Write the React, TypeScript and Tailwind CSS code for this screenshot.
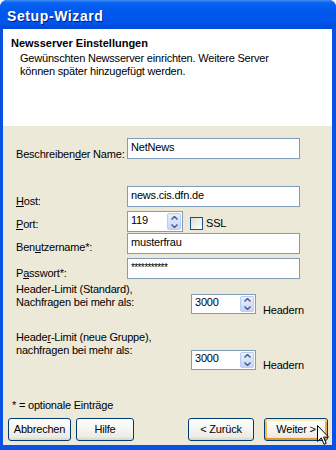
import React from "react";

function SpinButtons() {
  return (
    <div className="flex flex-col w-[14px] my-[1px] mr-[1px] rounded-[2px] border border-[#B9CBF7] bg-[linear-gradient(to_bottom,#E7EEFD,#C5D5FA)] overflow-hidden">
      <div className="flex-1 flex items-center justify-center border-b border-[#D7E2FC]">
        <svg width="7" height="4" viewBox="0 0 7 4">
          <path d="M0.5 3.5 L3.5 0.5 L6.5 3.5" stroke="#4D6185" strokeWidth="1.5" fill="none" />
        </svg>
      </div>
      <div className="flex-1 flex items-center justify-center">
        <svg width="7" height="4" viewBox="0 0 7 4">
          <path d="M0.5 0.5 L3.5 3.5 L6.5 0.5" stroke="#4D6185" strokeWidth="1.5" fill="none" />
        </svg>
      </div>
    </div>
  );
}

function TextBox({ value, cls }: { value: React.ReactNode; cls?: string }) {
  return (
    <div className={`w-[173px] h-[21px] border border-[#7F9DB9] bg-white pl-[3px] pt-[2px] ${cls ?? ""}`}>
      {value}
    </div>
  );
}

function XPButton({ label, width, focused }: { label: string; width: string; focused?: boolean }) {
  return (
    <div
      className={`${width} h-[23px] flex items-center justify-center rounded-[3px] border border-[#003C74] bg-[linear-gradient(to_bottom,#FFFFFF_0%,#F5F4F0_50%,#ECEBE4_85%,#D8D3C7_100%)] ${
        focused
          ? "shadow-[inset_0_2px_0_#FFE9A8,inset_0_-2px_0_#E5972E,inset_2px_0_0_#F8B94A,inset_-2px_0_0_#F0A83A]"
          : ""
      }`}
    >
      {label}
    </div>
  );
}

export default function App() {
  return (
    <div className="relative w-[336px] h-[450px] bg-white font-['Liberation_Sans',Arial,sans-serif] text-[11px] leading-[13px] text-black tracking-[-0.2px]">
      <div className="flex flex-col w-full h-full rounded-t-[7px] overflow-hidden bg-[#0A52E4]">
        {/* Title bar */}
        <div className="h-[29px] pl-[7px] pt-[9px] text-[14px] leading-[15px] font-bold tracking-[0.6px] text-white [text-shadow:1px_1px_0_#0A1A80] bg-[linear-gradient(to_bottom,#3E8EF6_0%,#0B63F2_10%,#0058EE_35%,#0055EA_75%,#0049DC_100%)]">
          Setup-Wizard
        </div>

        {/* Client area */}
        <div className="flex flex-col ml-[3px] mr-[4px] h-[416px] bg-[#ECE9D8]">
          {/* Header */}
          <div className="h-[97px] bg-white pl-[8px] pt-[8px]">
            <div className="font-bold tracking-normal">Newsserver Einstellungen</div>
            <div className="mt-[2px] pl-[9px]">
              Gewünschten Newsserver einrichten. Weitere Server
              <br />
              können später hinzugefügt werden.
            </div>
          </div>

          {/* Body */}
          <div className="flex flex-col">
            <div className="flex h-[21px] mt-[12px] pl-[13px]">
              <div className="w-[111px] pt-[10px]">
                Beschreiben<u>d</u>er Name:
              </div>
              <TextBox value="NetNews" />
            </div>

            <div className="flex h-[21px] mt-[27px] pl-[13px]">
              <div className="w-[111px] pt-[9px]">
                <u>H</u>ost:
              </div>
              <TextBox value="news.cis.dfn.de" />
            </div>

            <div className="flex items-start h-[21px] mt-[4px] pl-[13px]">
              <div className="w-[111px] pt-[7px]">
                <u>P</u>ort:
              </div>
              <div className="flex w-[56px] h-[21px] border border-[#7F9DB9] bg-white">
                <div className="flex-1 pl-[3px] pt-[2px]">119</div>
                <SpinButtons />
              </div>
              <div className="ml-[7px] mt-[6px] w-[13px] h-[13px] border border-[#1C5180] bg-[linear-gradient(135deg,#DCDCD7,#FFFFFF)]" />
              <div className="ml-[3px] pt-[6px]">SSL</div>
            </div>

            <div className="flex h-[21px] mt-[1px] pl-[13px]">
              <div className="w-[111px] pt-[8px]">
                Ben<u>u</u>tzername*:
              </div>
              <TextBox value="musterfrau" />
            </div>

            <div className="flex h-[21px] mt-[4px] pl-[13px]">
              <div className="w-[111px] pt-[9px]">
                P<u>a</u>sswort*:
              </div>
              <TextBox value="***********" cls="text-[10px] tracking-[-0.6px]" />
            </div>

            <div className="flex items-start h-[31px] mt-[4px] pl-[13px]">
              <div className="w-[175px]">
                Header-Limit (Standard),
                <br />
                Nachfragen bei mehr als:
              </div>
              <div className="flex mt-[11px] w-[65px] h-[20px] border border-[#7F9DB9] bg-white">
                <div className="flex-1 pl-[3px] pt-[1px]">3000</div>
                <SpinButtons />
              </div>
              <div className="ml-[7px] mt-[21px]">Headern</div>
            </div>

            <div className="flex items-start h-[39px] mt-[17px] pl-[13px]">
              <div className="w-[175px]">
                Heade<u>r</u>-Limit (neue Gruppe),
                <br />
                nachfragen bei mehr als:
              </div>
              <div className="flex mt-[19px] w-[65px] h-[20px] border border-[#7F9DB9] bg-white">
                <div className="flex-1 pl-[3px] pt-[1px]">3000</div>
                <SpinButtons />
              </div>
              <div className="ml-[7px] mt-[28px]">Headern</div>
            </div>

            <div className="mt-[29px] pl-[9px]">* = optionale Einträge</div>

            <div className="flex h-[23px] mt-[6px] pl-[5px] pr-[4px]">
              <XPButton label="Abbrechen" width="w-[63px]" />
              <div className="ml-[5px]">
                <XPButton label="Hilfe" width="w-[58px]" />
              </div>
              <div className="ml-auto">
                <XPButton label="< Zurück" width="w-[66px]" />
              </div>
              <div className="ml-[10px]">
                <XPButton label="Weiter >" width="w-[64px]" focused />
              </div>
            </div>
          </div>
        </div>
      </div>

      {/* Mouse cursor */}
      <svg className="absolute left-[317px] top-[425px]" width="13" height="21" viewBox="0 0 13 21">
        <path
          d="M0.5 0.5 L0.5 16.5 L4.3 12.8 L7 19.3 L9.2 18.4 L6.6 12.1 L11.5 12.1 Z"
          fill="white"
          stroke="black"
          strokeWidth="1"
          strokeLinejoin="miter"
        />
      </svg>
    </div>
  );
}
